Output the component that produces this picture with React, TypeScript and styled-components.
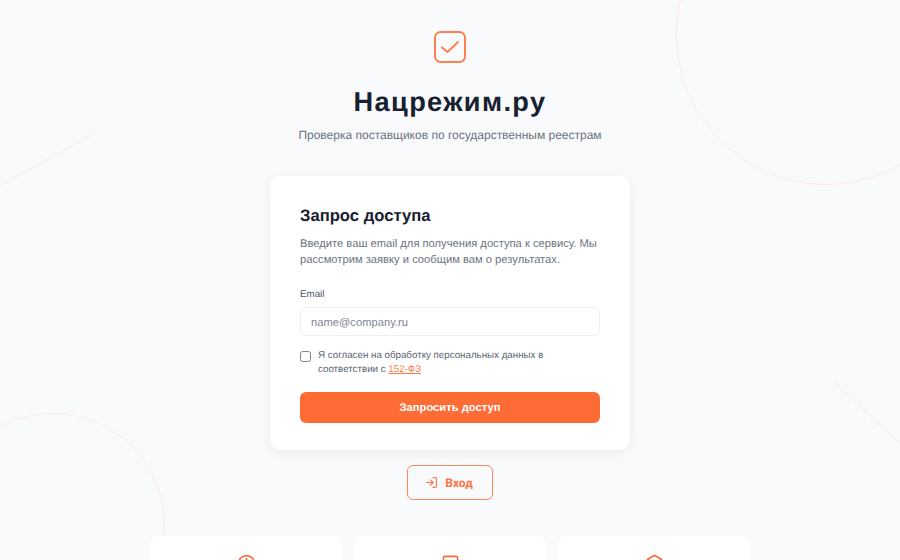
import React from "react";
import styled, { createGlobalStyle } from "styled-components";
import { Clock, Square, Box, LogIn } from "lucide-react";

const Global = createGlobalStyle`
  html, body { margin: 0; padding: 0; height: 100%; overflow: hidden; background: #f9fafc; }
  body {
    font-family: "Liberation Sans", Arial, sans-serif;
    text-rendering: geometricPrecision;
  }
`;

const Page = styled.div`
  position: relative;
  width: 900px;
  height: 560px;
  overflow: hidden;
  background: #f9fafc;
  display: flex;
  flex-direction: column;
  align-items: center;
  box-sizing: border-box;
  padding-top: 31px;
`;

const Ring = styled.div<{ $x: number; $y: number; $size: number }>`
  position: absolute;
  left: ${(p) => p.$x}px;
  top: ${(p) => p.$y}px;
  width: ${(p) => p.$size}px;
  height: ${(p) => p.$size}px;
  border-radius: 50%;
  border: 1.6px solid rgba(255, 107, 53, 0.11);
  box-sizing: border-box;
`;

const Streak = styled.div<{ $x: number; $y: number; $w: number; $deg: number }>`
  position: absolute;
  left: ${(p) => p.$x}px;
  top: ${(p) => p.$y}px;
  width: ${(p) => p.$w}px;
  height: 1.6px;
  background: rgba(255, 107, 53, 0.05);
  transform: rotate(${(p) => p.$deg}deg);
  transform-origin: left center;
`;

const LogoMark = styled.svg`
  position: relative;
  flex: none;
  width: 32px;
  height: 32px;
  fill: none;
  stroke: #ff6b35;
  stroke-width: 2;
  stroke-linecap: round;
  stroke-linejoin: round;
  opacity: 0.85;
`;

const Title = styled.h1`
  position: relative;
  margin: 22px 0 0;
  font-size: 27.2px;
  line-height: 34px;
  font-weight: 700;
  letter-spacing: 1.36px;
  color: #182130;
`;

const Subtitle = styled.p`
  position: relative;
  margin: 6px 0 0;
  font-size: 12px;
  line-height: 20px;
  color: #6b7280;
`;

const Card = styled.form`
  position: relative;
  margin-top: 31px;
  width: 360px;
  box-sizing: border-box;
  padding: 30px 30px 27px;
  background: #fff;
  border-radius: 10px;
  box-shadow: 0 3px 12px rgba(0, 0, 0, 0.06);
`;

const CardTitle = styled.h2`
  margin: 0;
  font-size: 16.64px;
  line-height: 20px;
  font-weight: 700;
  color: #182130;
`;

const CardText = styled.p`
  margin: 10px 0 0;
  font-size: 11.2px;
  line-height: 16px;
  color: #6b7280;
`;

const Label = styled.label`
  display: block;
  margin-top: 20px;
  font-size: 9.76px;
  line-height: 14px;
  color: #4b5563;
`;

const Input = styled.input`
  display: block;
  margin-top: 5px;
  width: 100%;
  height: 29px;
  box-sizing: border-box;
  padding: 2px 10px 0;
  border: 1px solid #edf0f4;
  border-radius: 6px;
  background: #fff;
  font-family: inherit;
  font-size: 11.2px;
  text-rendering: geometricPrecision;
  &::placeholder { color: #808692; opacity: 1; }
`;

const Consent = styled.div`
  display: flex;
  align-items: flex-start;
  gap: 7px;
  margin-top: 13px;
  font-size: 9.76px;
  line-height: 14px;
  color: #5b6472;
`;

const CheckBox = styled.span`
  flex: none;
  box-sizing: border-box;
  width: 11px;
  height: 11px;
  margin-top: 2px;
  border: 1px solid #80858e;
  border-radius: 2.5px;
  background: #fff;
`;

const Anchor = styled.a`
  color: #ff7a4a;
  text-decoration: underline;
`;

const Submit = styled.button`
  display: block;
  margin-top: 15px;
  width: 100%;
  height: 31px;
  border: none;
  border-radius: 6px;
  background: #ff6b35;
  color: #fff;
  font-family: inherit;
  font-size: 11.2px;
  font-weight: 700;
  text-rendering: geometricPrecision;
`;

const LoginButton = styled.button`
  position: relative;
  margin-top: 15px;
  flex: none;
  width: 86px;
  height: 35px;
  display: flex;
  align-items: center;
  justify-content: center;
  gap: 7px;
  padding: 0 2px 0 0;
  border: 1px solid rgba(255, 107, 53, 0.8);
  border-radius: 6px;
  background: transparent;
  color: #ff7340;
  font-family: Roboto, sans-serif;
  font-size: 12px;
  font-weight: 700;
  text-rendering: geometricPrecision;
`;

const Features = styled.div`
  position: relative;
  margin-top: 36px;
  display: grid;
  grid-template-columns: repeat(3, 192px);
  gap: 12px;
`;

const Feature = styled.div`
  height: 120px;
  background: #fff;
  border-radius: 8px;
  padding-top: 18px;
  box-sizing: border-box;
  display: flex;
  justify-content: center;
  color: #ff6b35;
`;

export default function App() {
  return (
    <Page>
      <Global />
      <Ring $x={676} $y={-115} $size={300} />
      <Ring $x={-59} $y={413} $size={224} />
      <Streak $x={-2} $y={186} $w={110} $deg={-29} />
      <Streak $x={834} $y={381} $w={95} $deg={43} />
      <LogoMark viewBox="0 0 32 32" aria-hidden="true">
        <rect x="1" y="1" width="30" height="30" rx="5.5" />
        <path d="M8 16.5 L13.5 21 L24 11" />
      </LogoMark>
      <Title>Нацрежим.ру</Title>
      <Subtitle>Проверка поставщиков по государственным реестрам</Subtitle>
      <Card>
        <CardTitle>Запрос доступа</CardTitle>
        <CardText>
          Введите ваш email для получения доступа к сервису. Мы рассмотрим заявку и сообщим вам о результатах.
        </CardText>
        <Label>Email</Label>
        <Input placeholder="name@company.ru" />
        <Consent>
          <CheckBox />
          <span>
            Я согласен на обработку персональных данных в соответствии с <Anchor href="#">152-ФЗ</Anchor>
          </span>
        </Consent>
        <Submit type="button">Запросить доступ</Submit>
      </Card>
      <LoginButton type="button">
        <LogIn size={13} />
        Вход
      </LoginButton>
      <Features>
        <Feature><Clock size={19} /></Feature>
        <Feature><Square size={19} /></Feature>
        <Feature><Box size={19} /></Feature>
      </Features>
    </Page>
  );
}
